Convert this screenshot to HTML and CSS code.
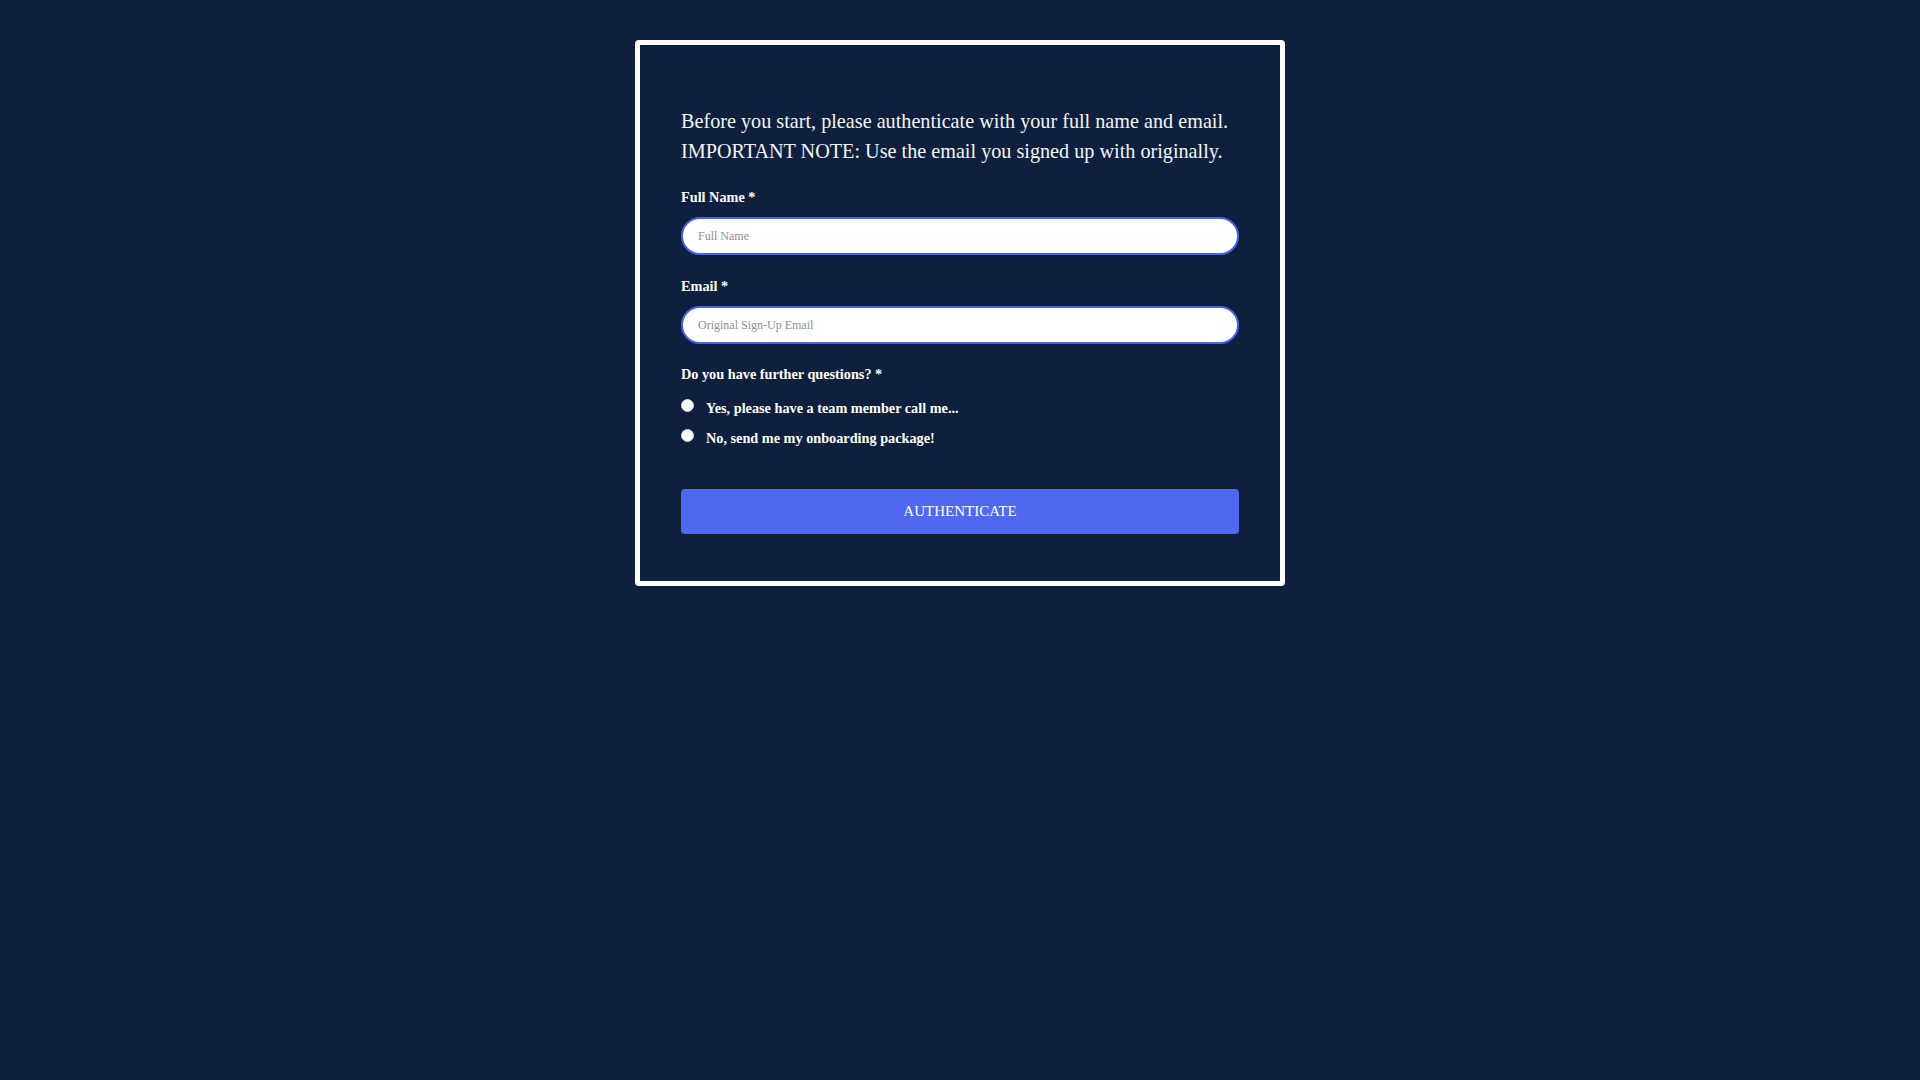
FILE: index.html
```html
<!DOCTYPE html>
<html lang="en">
<head>
<meta charset="utf-8">
<title>Authenticate</title>
<link rel="stylesheet" href="styles.css">
</head>
<body>
<main class="card">
  <p class="intro">Before you start, please authenticate with your full name and email. IMPORTANT NOTE: Use the email you signed up with originally.</p>
  <form class="form">
    <div class="field">
      <label class="label" for="fullname">Full Name *</label>
      <input class="input" id="fullname" type="text" placeholder="Full Name">
    </div>
    <div class="field field-email">
      <label class="label" for="email">Email *</label>
      <input class="input" id="email" type="email" placeholder="Original Sign-Up Email">
    </div>
    <div class="field field-radio">
      <span class="label label-q">Do you have further questions? *</span>
      <label class="radio-row"><input class="radio" type="radio" name="q"><span>Yes, please have a team member call me...</span></label>
      <label class="radio-row"><input class="radio" type="radio" name="q"><span>No, send me my onboarding package!</span></label>
    </div>
    <button class="btn" type="button">AUTHENTICATE</button>
  </form>
</main>
</body>
</html>
```
FILE: styles.css
```css
html, body {
  margin: 0;
  padding: 0;
  background: #0e203d;
  font-family: "Liberation Serif", "Times New Roman", serif;
  color: #ffffff;
}

.card {
  box-sizing: border-box;
  width: 650px;
  margin: 40px auto 0;
  border: 5px solid #ffffff;
  border-radius: 4px;
  padding: 61px 41px 47px;
  background: #0e203d;
  box-shadow: 0 3px 1px rgba(255, 255, 255, 0.09);
}

.intro {
  margin: 0 0 23px;
  font-size: 20.2px;
  line-height: 30px;
  color: #f4f5f8;
}

.form {
  display: flex;
  flex-direction: column;
}

.field {
  display: flex;
  flex-direction: column;
  margin-bottom: 23px;
}

.field-email {
  margin-bottom: 22px;
}

.label {
  font-size: 14.25px;
  font-weight: bold;
  line-height: 16px;
  margin-bottom: 12px;
  color: #ffffff;
}

.input {
  box-sizing: border-box;
  height: 38px;
  width: 100%;
  border: 2px solid #4b63e8;
  border-radius: 20px;
  background: #ffffff;
  padding: 0 15px;
  font-family: "Liberation Serif", "Times New Roman", serif;
  font-size: 12px;
  color: #333333;
  outline: none;
}

.input::placeholder {
  color: #8f8f8f;
}

.field-radio {
  margin-bottom: 36px;
}

.label-q {
  margin-bottom: 11px;
}

.radio-row {
  display: flex;
  align-items: flex-start;
  height: 30px;
  line-height: 30px;
  font-size: 14.25px;
  font-weight: bold;
  color: #ffffff;
}

.radio {
  appearance: none;
  -webkit-appearance: none;
  box-sizing: border-box;
  width: 13px;
  height: 13px;
  margin: 6px 12px 0 0;
  border: 1px solid #d6d6d6;
  border-radius: 50%;
  background: #fafafa;
  flex-shrink: 0;
}

.btn {
  height: 45px;
  width: 100%;
  border: none;
  border-radius: 4px;
  background: #5068f0;
  color: #ffffff;
  font-family: "Liberation Serif", "Times New Roman", serif;
  font-size: 15px;
  letter-spacing: 0;
  cursor: pointer;
}
```
